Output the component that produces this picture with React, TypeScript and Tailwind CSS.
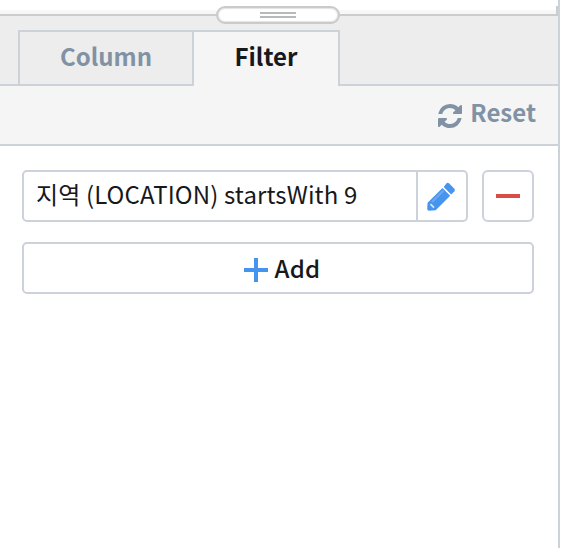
function Tabs() {
  return (
    <div className="flex h-[70px] bg-[#ededed] pt-[14px] text-[24px] leading-[48px] font-bold">
      <div className="w-[18px] border-b-2 border-[#cdd1da]" />
      <button className="flex w-[174px] justify-center border-2 border-r-0 border-[#cdd1da] text-[#8292a5]">
        Column
      </button>
      <button className="flex w-[148px] justify-center border-x-2 border-t-2 border-[#cdd1da] bg-[#f5f5f5] text-[#17181b]">
        Filter
      </button>
      <div className="flex-1 border-b-2 border-[#cdd1da]" />
    </div>
  );
}

function Refresh() {
  return (
    <svg className="mt-[2px] mr-[8px] size-6" viewBox="0 0 1536 1536" fill="currentColor">
      <path d="M1511 928q0 5-1 7-64 268-268 434.500T764 1536q-146 0-282.500-55T238 1324l-129 129q-19 19-45 19t-45-19T0 1408V960q0-26 19-45t45-19h448q26 0 45 19t19 45-19 45l-137 137q71 66 161 102t187 36q134 0 250-65t186-179q11-17 53-117 8-23 30-23h192q13 0 22.500 9.500t9.500 22.500zm25-800v448q0 26-19 45t-45 19h-448q-26 0-45-19t-19-45 19-45l138-138Q969 256 768 256q-134 0-250 65T332 500q-11 17-53 117-8 23-30 23H50q-13 0-22.500-9.500T18 608v-7q65-268 270-434.500T768 0q146 0 284 55.500T1297 212l130-129q19-19 45-19t45 19 19 45z" />
    </svg>
  );
}

function Pencil() {
  return (
    <svg className="mt-[2px] -ml-[2px]" width="30" height="30" viewBox="0 0 30 30" fill="#4794ef">
      <path d="M20.400 1.500a2 2 0 0 1 2.800 0l5.200 5.200a2 2 0 0 1 0 2.500l-3.200 3.400-7.500-7.600z" />
      <path d="m16.500 6 7.700 7.700-14.500 14.500-7 .5-1.500-1.200.4-6.800z" />
      <path d="M17.500 8.500 6 20" fill="none" stroke="#6aa9f2" strokeWidth="2" />
      <path d="m4.500 22.200 3.500 3.500" fill="none" stroke="#d5e7fc" strokeWidth="1.800" />
    </svg>
  );
}

export default function App() {
  return (
    <div className="h-[548px] w-[570px] overflow-hidden bg-white font-['Noto_Sans_CJK_KR',sans-serif] text-[#17181b]">
      <div className="relative h-full w-[560px] border-r-2 border-[#cdd1da]">
        <div className="h-[10px]" />
        <div className="h-[6px] border-b-2 border-[#cccccc] bg-[#f7f7f7]" />
        <div className="absolute top-[6px] right-0 h-[10px] w-[2px] bg-[#cccccc]" />
        <div className="absolute top-[6px] left-[216px] flex h-[18px] w-[124px] flex-col items-center justify-center gap-[2px] rounded-[9px] border-2 border-[#cacaca] bg-white shadow-[inset_0_0_1px_1px_#e4e4e4]">
          <div className="h-[2px] w-9 bg-[#b9b9b9]" />
          <div className="h-[2px] w-9 bg-[#b9b9b9]" />
        </div>
        <Tabs />
        <div className="flex h-[60px] items-center justify-end border-b-2 border-[#cdd1da] bg-[#f5f5f5] pr-[22px] text-[24px] leading-[52px] font-bold text-[#8292a5]">
          <Refresh />
          <span className="-mt-1.5">Reset</span>
        </div>
        <div className="flex flex-col gap-5 pt-6 pr-6 pl-[22px] text-[24px] leading-[46px]">
          <div className="flex h-[52px] gap-[14px]">
            <div className="flex flex-1 rounded-[5px] border-2 border-[#cdd1da]">
              <span className="flex-1 pl-3 leading-[44px] tracking-[0.12px] whitespace-nowrap">지역 (LOCATION) startsWith 9</span>
              <button className="flex w-[50px] items-center justify-center border-l-2 border-[#cdd1da]">
                <Pencil />
              </button>
            </div>
            <button className="flex size-[52px] items-center justify-center rounded-[6px] border-2 border-[#cdd1da]">
              <span className="h-1 w-6 bg-[#da4d46]" />
            </button>
          </div>
          <button className="flex h-[52px] items-center justify-center gap-[7px] rounded-[5px] border-2 border-[#cdd1da] pl-2 font-medium">
            <svg className="mt-1" width="24" height="24" viewBox="0 0 24 24" stroke="#4794ef" strokeWidth="4">
              <path d="M0 12h24M12 0v24" />
            </svg>
            <span className="tracking-[0.2px]">Add</span>
          </button>
        </div>
      </div>
    </div>
  );
}
